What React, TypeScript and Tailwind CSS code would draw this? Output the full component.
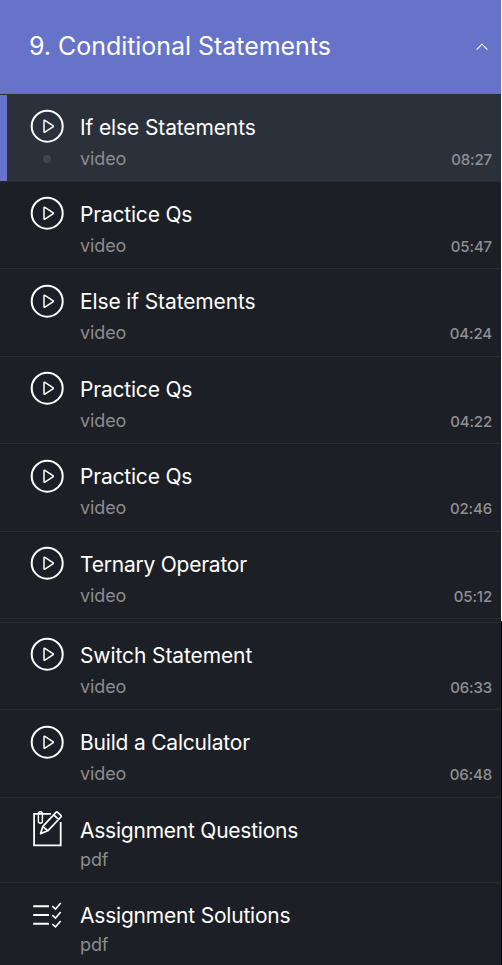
const font = { fontFamily: 'Inter, "Noto Sans", sans-serif' };

type Kind = "video" | "questions" | "solutions";
type Item = {
  title: string;
  kind: Kind;
  time?: string;
  row: string;
  tracking: string;
  icon: string;
  active?: boolean;
};

const first: Item[] = [
  { title: "If else Statements", kind: "video", time: "08:27", row: "h-[87px]", tracking: "tracking-[-0.12px]", icon: "pt-[14px]", active: true },
  { title: "Practice Qs", kind: "video", time: "05:47", row: "h-[87px]", tracking: "tracking-[-0.2px]", icon: "pt-[14px]" },
  { title: "Else if Statements", kind: "video", time: "04:24", row: "h-[88px]", tracking: "tracking-[-0.12px]", icon: "pt-[15px]" },
  { title: "Practice Qs", kind: "video", time: "04:22", row: "h-[87px]", tracking: "tracking-[-0.2px]", icon: "pt-[14px]" },
  { title: "Practice Qs", kind: "video", time: "02:46", row: "h-[88px]", tracking: "tracking-[-0.2px]", icon: "pt-[15px]" },
  { title: "Ternary Operator", kind: "video", time: "05:12", row: "h-[87px]", tracking: "tracking-[-0.23px]", icon: "pt-[14px]" },
];

const second: Item[] = [
  { title: "Switch Statement", kind: "video", time: "06:33", row: "h-[87px]", tracking: "tracking-[-0.1px]", icon: "pt-[14px]" },
  { title: "Build a Calculator", kind: "video", time: "06:48", row: "h-[88px]", tracking: "tracking-[-0.2px]", icon: "pt-[15px]" },
  { title: "Assignment Questions", kind: "questions", row: "h-[85px]", tracking: "tracking-[-0.23px]", icon: "pt-[12px]" },
  { title: "Assignment Solutions", kind: "solutions", row: "h-[83px]", tracking: "tracking-[-0.2px]", icon: "pt-[15px]" },
];

function PlayIcon() {
  return (
    <svg width="34" height="34" viewBox="0 0 34 34" fill="none" stroke="#fff">
      <circle cx="17.2" cy="17.2" r="15.5" strokeWidth="2" />
      <path d="M14 11.8v10.8q0 1 .9.5l8-5.3q.8-.5 0-1.1l-8-5.3q-.9-.6-.9.4z" strokeWidth="1.5" strokeLinejoin="round" />
    </svg>
  );
}

function QuestionsIcon() {
  return (
    <svg width="34" height="38" viewBox="0 0 34 38" fill="none" stroke="#fff" strokeWidth="1.7">
      <path d="M21 3.9H4.1v31.4h26.6V12" strokeWidth="1.8" />
      <path d="M8.4 6V3.6q0-1.8 2-1.8t2 1.8v7.6q0 2-2 2t-2-2V6" strokeWidth="1.4" />
      <path d="M10.6 23.6l2.3-7.3L26 2.4q.8-.8 1.6 0l3.3 3q.8.8 0 1.6L17.8 20.8zM12.9 16.3l4.9 4.5M23.7 4.8l4.9 4.5" strokeLinejoin="round" />
    </svg>
  );
}

function SolutionsIcon() {
  return (
    <svg width="34" height="34" viewBox="0 0 34 34" fill="none" stroke="#fff">
      <path d="M3.2 8.3H19M3.2 17H19M3.2 25.8H19" strokeWidth="1.9" />
      <path d="M22.3 8.2l3.2 2.8 5.2-6M22.3 17.2l3.2 2.8 5.2-6M22.3 26.2l3.2 2.6 5.2-5.8" strokeWidth="1.6" />
    </svg>
  );
}

function Row({ item }: { item: Item }) {
  return (
    <li
      className={`flex shrink-0 border-b ${item.row} ${
        item.active ? "border-[#252a31] bg-[#2b313b]" : "border-[#2d2c2d] bg-[#1d1f26]"
      }`}
    >
      <div className={`w-[7px] ${item.active ? "bg-[#6772c9]" : ""}`} />
      <div className={`flex w-[73px] flex-col items-start pl-[23px] ${item.icon}`}>
        {item.kind === "video" ? <PlayIcon /> : item.kind === "questions" ? <QuestionsIcon /> : <SolutionsIcon />}
        {item.active && <span className="mt-[12px] ml-[13px] size-2 rounded-full bg-[#3e4655]" />}
      </div>
      <div className="flex-1 pt-[18px]">
        <h3 className={`h-[30px] text-[21px] leading-[29px] whitespace-nowrap text-white ${item.tracking}`}>{item.title}</h3>
        <p className={`text-[18px] leading-6 tracking-[-0.1px] text-[#8b8c8f] ${item.kind === "video" ? "mt-1" : "mt-0.5"}`}>
          {item.kind === "video" ? "video" : "pdf"}
        </p>
      </div>
      {item.time && (
        <time className="mt-[53px] pr-[9px] text-[15px] leading-6 font-medium tracking-[-0.15px] text-[#8f9093]">
          {item.time}
        </time>
      )}
    </li>
  );
}

export default function App() {
  return (
    <main className="flex h-[965px] w-[502px] flex-col overflow-hidden bg-[#1d1f26]" style={font}>
      <section className="h-[621px] shrink-0 border-r border-white">
        <header className="flex h-[94px] items-center justify-between bg-[#6772c9] pr-[13px] pl-[29px] text-white">
          <h2 className="pb-0.5 text-[25px] leading-8 tracking-[-0.04px] whitespace-nowrap">9. Conditional Statements</h2>
          <svg width="12" height="8" viewBox="0 0 12 8" fill="none" stroke="#fff" strokeWidth="1.1">
            <path d="M.6 6.6L6 1.2l5.4 5.4" />
          </svg>
        </header>
        <ul className="border-t border-[#2c2d2f]">
          {first.map((item, i) => (
            <Row key={i} item={item} />
          ))}
        </ul>
      </section>
      <section className="h-[344px] shrink-0 border-r border-black pt-px">
        <ul className="border-t border-[#2d2c2d]">
          {second.map((item) => (
            <Row key={item.title} item={item} />
          ))}
        </ul>
      </section>
    </main>
  );
}
